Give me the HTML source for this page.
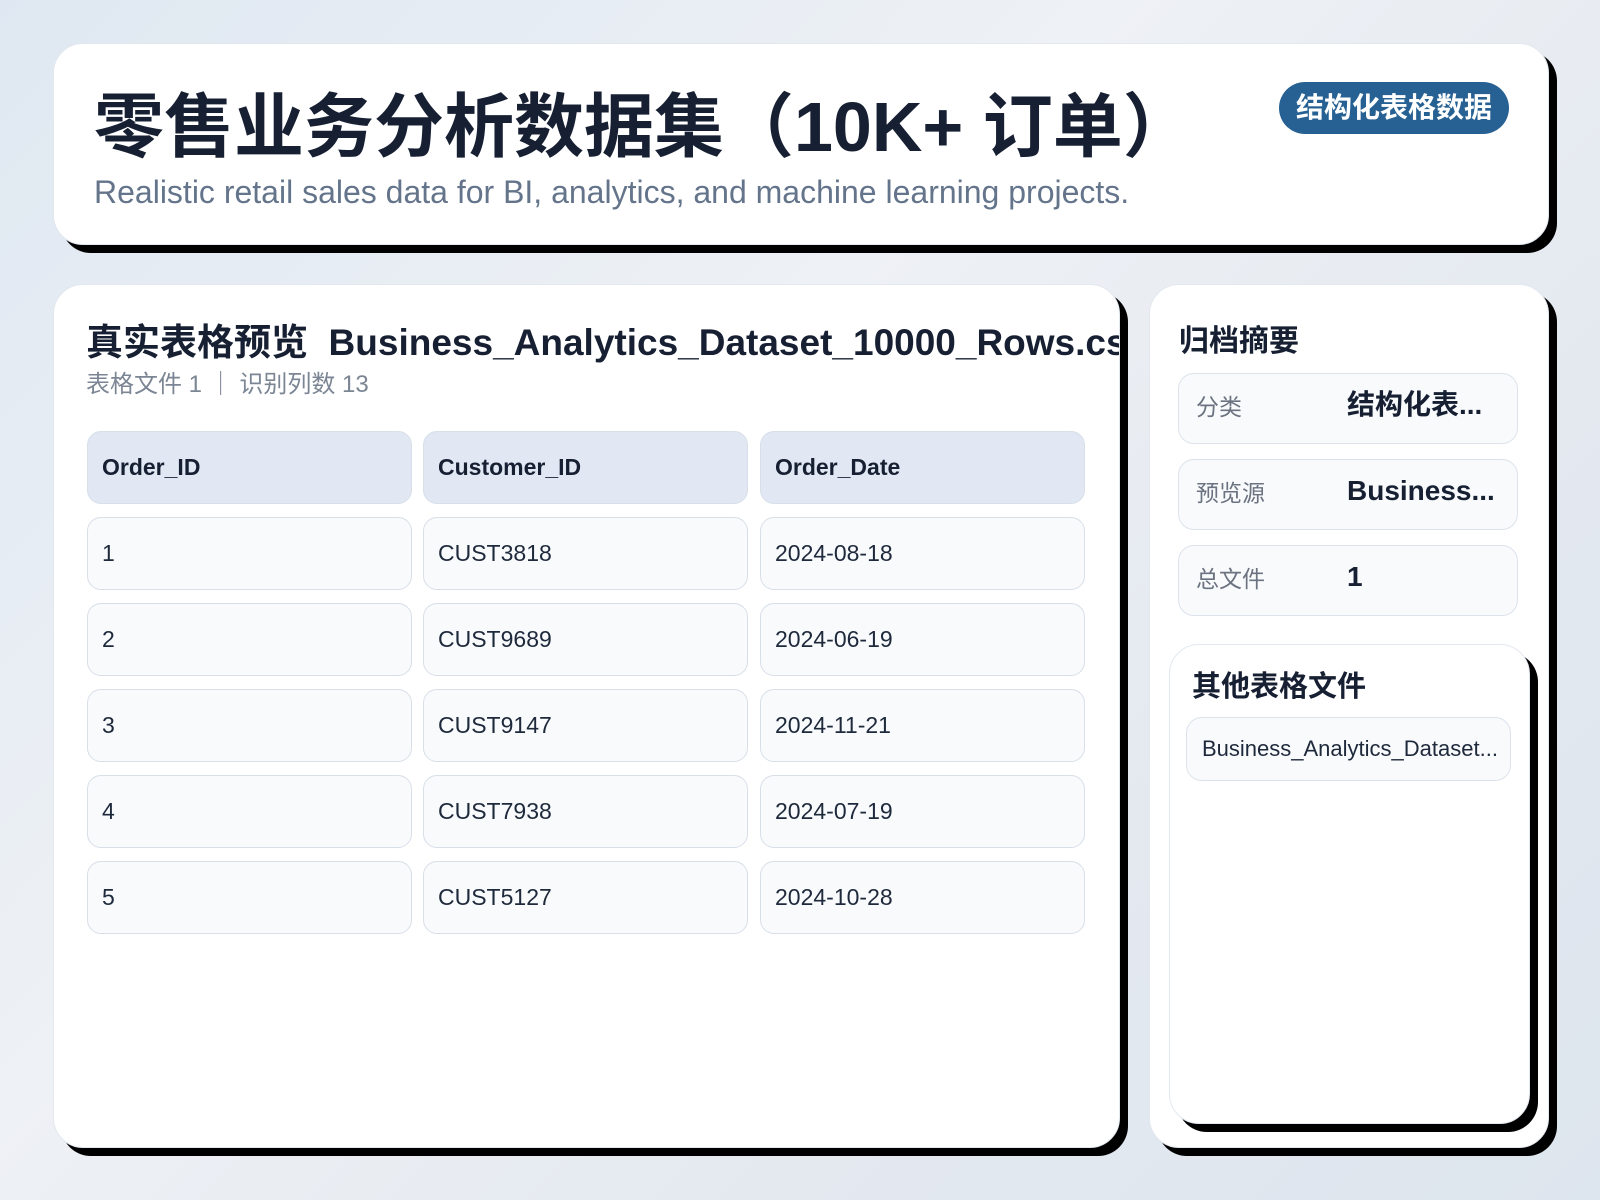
<!DOCTYPE html>
<html><head><meta charset="utf-8"><style>
*{box-sizing:border-box;margin:0;padding:0}
body{width:1600px;height:1200px;overflow:hidden;font-family:"Liberation Sans","Noto Sans CJK SC",sans-serif;background:linear-gradient(135deg,#dfe8f2 0%,#eef1f5 40%,#e4e9f0 70%,#dde5ee 100%);position:relative;color:#172033}
.card{position:absolute;background:#fff;border-radius:30px;box-shadow:8px 8px 0 #000;border:1px solid #e3e8ef;overflow:hidden}
.h1{position:absolute;left:40px;top:27px;font-size:70px;font-weight:bold;white-space:nowrap;color:#172033}
.sub{position:absolute;left:40px;top:130px;font-size:32px;color:#64748b;white-space:nowrap}
.badge{position:absolute;left:1225px;top:38px;width:230px;height:52px;border-radius:26px;background:#276193;color:#fff;font-weight:bold;font-size:28px;text-align:center;line-height:52px}
.t2{position:absolute;left:32px;top:27px;font-size:37px;font-weight:bold;white-space:nowrap}
.s2{position:absolute;left:32px;top:79px;font-size:24px;color:#7b8594;white-space:nowrap}
.cell{position:absolute;width:325px;height:73px;border-radius:14px;border:1px solid #d8dfe8;background:#f8fafc;font-size:23px;padding-left:14px;line-height:71px;color:#1e293b}
.hd{background:#e1e8f3;font-weight:bold;color:#172033}
.rt{position:absolute;font-size:30px;font-weight:bold}
.box{position:absolute;left:28px;width:340px;height:71px;border-radius:16px;border:1px solid #dde3eb;background:#f8fafc}
.box .l{position:absolute;left:17px;top:0;line-height:67px;font-size:23px;color:#6b7280}
.box .v{position:absolute;left:168px;top:0;line-height:62px;font-size:28px;font-weight:bold;color:#172033}
</style></head><body>
<div class="card" style="left:53px;top:43px;width:1496px;height:202px">
<div class="h1">零售业务分析数据集（10K+ 订单）</div>
<div class="sub">Realistic retail sales data for BI, analytics, and machine learning projects.</div>
<div class="badge">结构化表格数据</div>
</div>
<div class="card" style="left:53px;top:284px;width:1067px;height:864px">
<div class="t2">真实表格预览&nbsp; Business_Analytics_Dataset_10000_Rows.csv</div>
<div class="s2">表格文件 1 ｜ 识别列数 13</div>
<div class="cell hd" style="left:33px;top:146px">Order_ID</div>
<div class="cell hd" style="left:369px;top:146px">Customer_ID</div>
<div class="cell hd" style="left:706px;top:146px">Order_Date</div>
<div class="cell" style="left:33px;top:232px">1</div><div class="cell" style="left:369px;top:232px">CUST3818</div><div class="cell" style="left:706px;top:232px">2024-08-18</div>
<div class="cell" style="left:33px;top:318px">2</div><div class="cell" style="left:369px;top:318px">CUST9689</div><div class="cell" style="left:706px;top:318px">2024-06-19</div>
<div class="cell" style="left:33px;top:404px">3</div><div class="cell" style="left:369px;top:404px">CUST9147</div><div class="cell" style="left:706px;top:404px">2024-11-21</div>
<div class="cell" style="left:33px;top:490px">4</div><div class="cell" style="left:369px;top:490px">CUST7938</div><div class="cell" style="left:706px;top:490px">2024-07-19</div>
<div class="cell" style="left:33px;top:576px">5</div><div class="cell" style="left:369px;top:576px">CUST5127</div><div class="cell" style="left:706px;top:576px">2024-10-28</div>
</div>
<div class="card" style="left:1149px;top:284px;width:400px;height:864px;overflow:visible">
<div class="rt" style="left:29px;top:31px">归档摘要</div>
<div class="box" style="top:88px"><span class="l">分类</span><span class="v">结构化表...</span></div>
<div class="box" style="top:174px"><span class="l">预览源</span><span class="v">Business...</span></div>
<div class="box" style="top:260px"><span class="l">总文件</span><span class="v">1</span></div>
<div class="card" style="left:19px;top:359px;width:361px;height:480px">
<div class="rt" style="left:22px;top:18px;font-size:29px">其他表格文件</div>
<div style="position:absolute;left:16px;top:72px;width:325px;height:64px;border-radius:16px;border:1px solid #dde3eb;background:#f8fafc;font-size:22px;line-height:62px;padding-left:15px;white-space:nowrap;overflow:hidden;color:#1e293b">Business_Analytics_Dataset...</div>
</div>
</div>
</body></html>
